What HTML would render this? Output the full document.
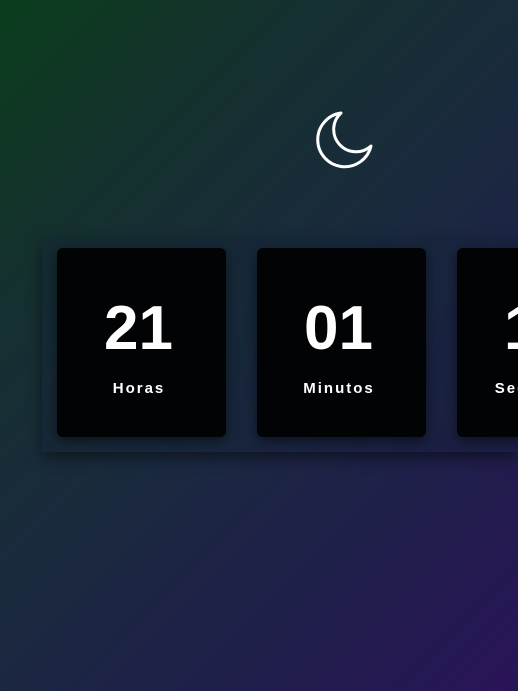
<!DOCTYPE html>
<html><head><meta charset="utf-8"><style>
html,body{margin:0;width:518px;height:691px;overflow:hidden}
body{background:linear-gradient(135deg,#0b3d1c 0%,#15302f 25%,#1a2a3e 50%,#1f1f4a 75%,#2a1458 100%);font-family:"Liberation Sans",sans-serif;position:relative}
.wrap{position:absolute;left:42px;top:238px;width:476px;height:214px;background:rgba(20,35,55,0.35);box-shadow:0 6px 14px rgba(0,0,0,0.45);overflow:hidden}
.card{position:absolute;top:10px;width:169px;height:189px;background:#020305;border-radius:6px;box-shadow:0 4px 12px rgba(0,0,0,0.5);color:#fff;text-align:center}
.n{position:absolute;top:46px;left:0;right:6px;font-size:62px;line-height:70px;font-weight:bold}
.l{position:absolute;top:132px;left:0;right:5px;font-size:15px;font-weight:bold;letter-spacing:2px}
</style></head><body>
<svg style="position:absolute;left:310px;top:108px" width="66" height="64" viewBox="0 0 66 64">
<path d="M31 5 A27 27 0 1 0 61 38 A22 22 0 0 1 31 5 Z" fill="none" stroke="#fff" stroke-width="3" stroke-linejoin="round"/>
</svg>
<div class="wrap">
<div class="card" style="left:15px"><div class="n">21</div><div class="l">Horas</div></div>
<div class="card" style="left:215px"><div class="n">01</div><div class="l">Minutos</div></div>
<div class="card" style="left:415px"><div class="n">15</div><div class="l">Segundos</div></div>
</div>
</body></html>
